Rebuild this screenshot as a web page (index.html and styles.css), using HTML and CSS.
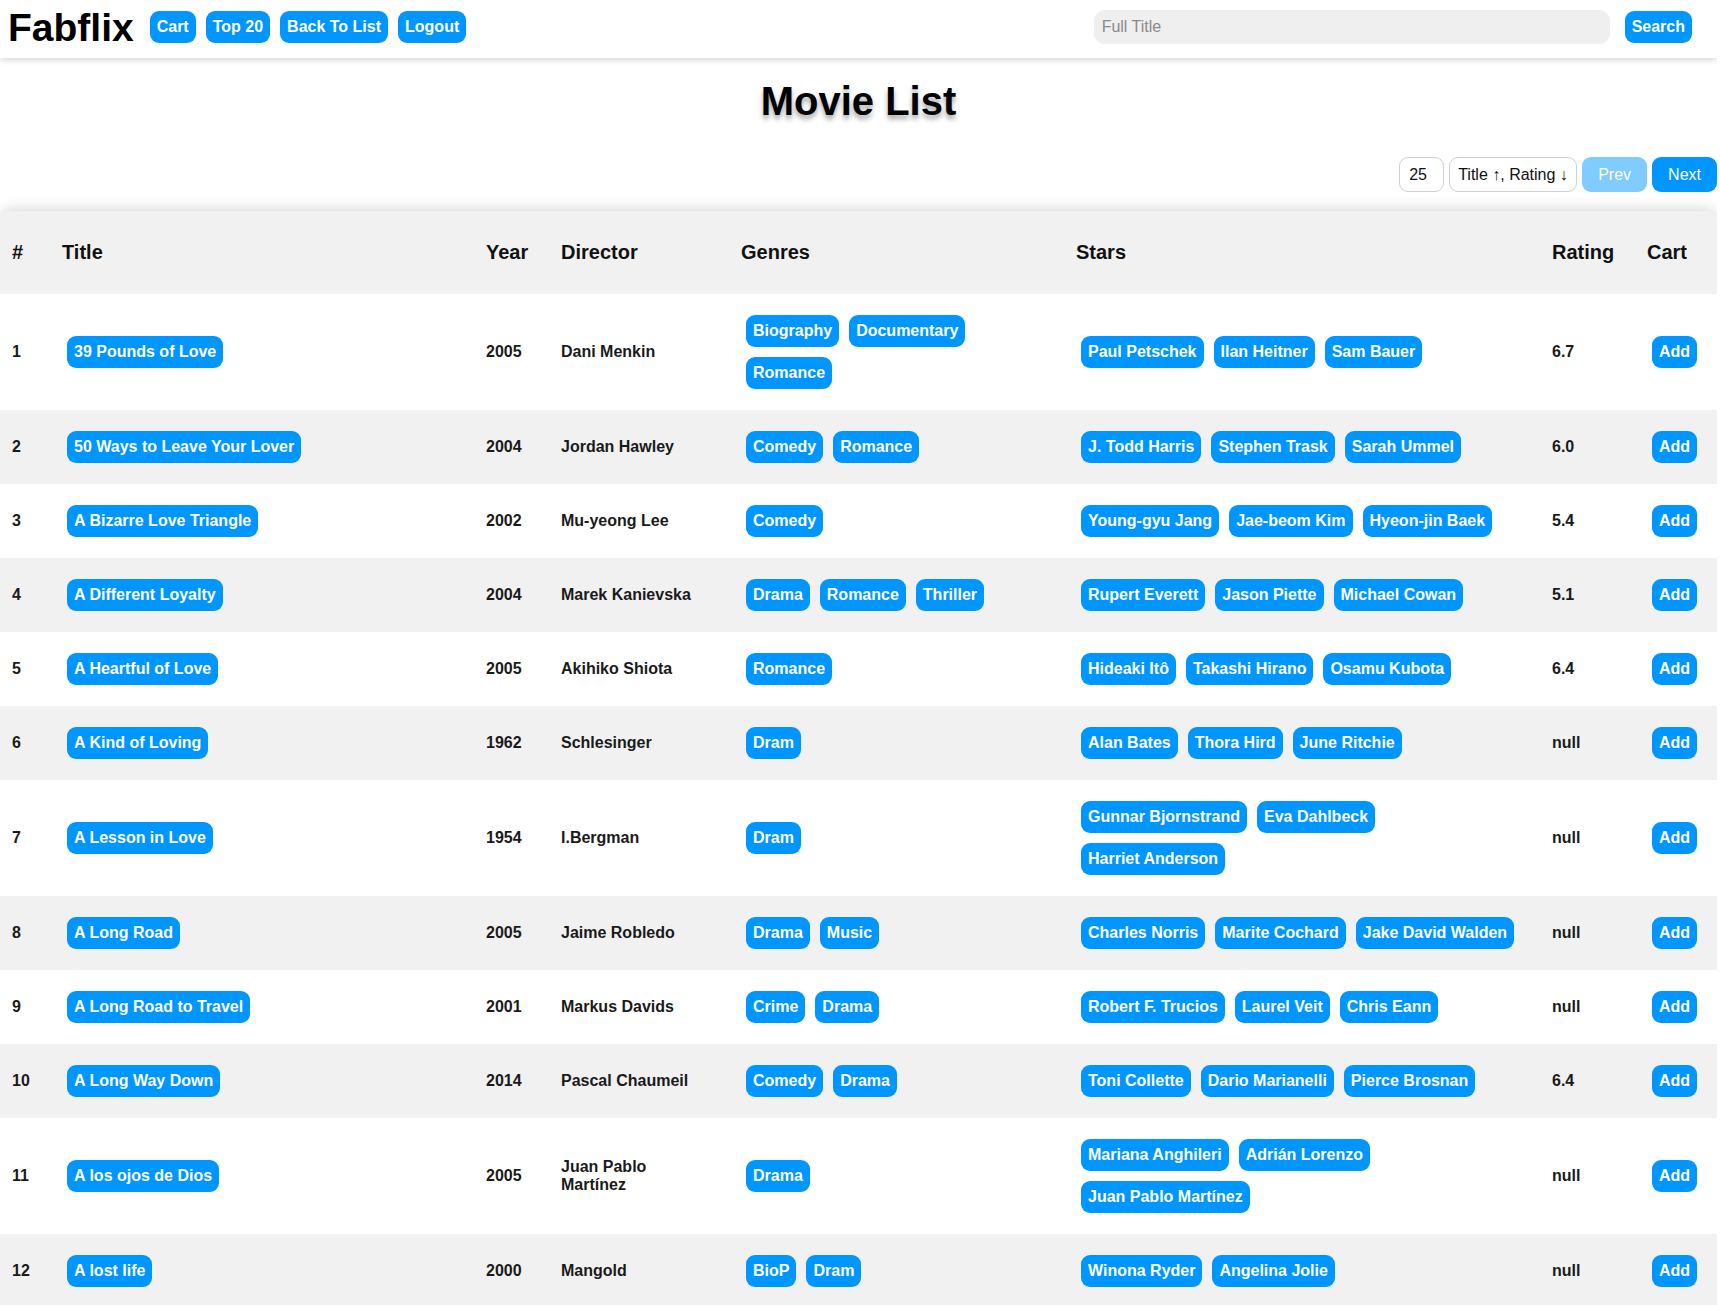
FILE: index.html
```html
<!DOCTYPE html>
<html lang="en">
<head>
<meta charset="utf-8">
<title>Fabflix - Movie List</title>
<link rel="stylesheet" href="styles.css">
</head>
<body>
<header class="topbar">
  <div class="brand">Fabflix</div>
  <nav class="nav">
    <a class="btn" href="#">Cart</a>
    <a class="btn" href="#">Top 20</a>
    <a class="btn" href="#">Back To List</a>
    <a class="btn" href="#">Logout</a>
  </nav>
  <form class="search">
    <input class="search-input" type="text" placeholder="Full Title">
    <button class="btn" type="button">Search</button>
  </form>
</header>

<main class="page">
  <h1 class="page-title">Movie List</h1>

  <div class="controls">
    <span class="field per-page">25</span>
    <span class="field sort">Title ↑, Rating ↓</span>
    <button class="pager pager-disabled" type="button">Prev</button>
    <button class="pager" type="button">Next</button>
  </div>

  <table class="movies">
    <colgroup>
      <col class="c-num"><col class="c-title"><col class="c-year"><col class="c-dir">
      <col class="c-genres"><col class="c-stars"><col class="c-rating"><col class="c-cart">
    </colgroup>
    <thead>
      <tr><th>#</th><th>Title</th><th>Year</th><th>Director</th><th>Genres</th><th>Stars</th><th>Rating</th><th>Cart</th></tr>
    </thead>
    <tbody>
      <tr>
        <td>1</td>
        <td><div class="tags"><a class="pill" href="#">39 Pounds of Love</a></div></td>
        <td>2005</td>
        <td class="dir">Dani Menkin</td>
        <td><div class="tags"><a class="pill" href="#">Biography</a><a class="pill" href="#">Documentary</a><a class="pill" href="#">Romance</a></div></td>
        <td><div class="tags"><a class="pill" href="#">Paul Petschek</a><a class="pill" href="#">Ilan Heitner</a><a class="pill" href="#">Sam Bauer</a></div></td>
        <td>6.7</td>
        <td><div class="tags"><a class="pill" href="#">Add</a></div></td>
      </tr>
      <tr>
        <td>2</td>
        <td><div class="tags"><a class="pill" href="#">50 Ways to Leave Your Lover</a></div></td>
        <td>2004</td>
        <td class="dir">Jordan Hawley</td>
        <td><div class="tags"><a class="pill" href="#">Comedy</a><a class="pill" href="#">Romance</a></div></td>
        <td><div class="tags"><a class="pill" href="#">J. Todd Harris</a><a class="pill" href="#">Stephen Trask</a><a class="pill" href="#">Sarah Ummel</a></div></td>
        <td>6.0</td>
        <td><div class="tags"><a class="pill" href="#">Add</a></div></td>
      </tr>
      <tr>
        <td>3</td>
        <td><div class="tags"><a class="pill" href="#">A Bizarre Love Triangle</a></div></td>
        <td>2002</td>
        <td class="dir">Mu-yeong Lee</td>
        <td><div class="tags"><a class="pill" href="#">Comedy</a></div></td>
        <td><div class="tags"><a class="pill" href="#">Young-gyu Jang</a><a class="pill" href="#">Jae-beom Kim</a><a class="pill" href="#">Hyeon-jin Baek</a></div></td>
        <td>5.4</td>
        <td><div class="tags"><a class="pill" href="#">Add</a></div></td>
      </tr>
      <tr>
        <td>4</td>
        <td><div class="tags"><a class="pill" href="#">A Different Loyalty</a></div></td>
        <td>2004</td>
        <td class="dir">Marek Kanievska</td>
        <td><div class="tags"><a class="pill" href="#">Drama</a><a class="pill" href="#">Romance</a><a class="pill" href="#">Thriller</a></div></td>
        <td><div class="tags"><a class="pill" href="#">Rupert Everett</a><a class="pill" href="#">Jason Piette</a><a class="pill" href="#">Michael Cowan</a></div></td>
        <td>5.1</td>
        <td><div class="tags"><a class="pill" href="#">Add</a></div></td>
      </tr>
      <tr>
        <td>5</td>
        <td><div class="tags"><a class="pill" href="#">A Heartful of Love</a></div></td>
        <td>2005</td>
        <td class="dir">Akihiko Shiota</td>
        <td><div class="tags"><a class="pill" href="#">Romance</a></div></td>
        <td><div class="tags"><a class="pill" href="#">Hideaki Itô</a><a class="pill" href="#">Takashi Hirano</a><a class="pill" href="#">Osamu Kubota</a></div></td>
        <td>6.4</td>
        <td><div class="tags"><a class="pill" href="#">Add</a></div></td>
      </tr>
      <tr>
        <td>6</td>
        <td><div class="tags"><a class="pill" href="#">A Kind of Loving</a></div></td>
        <td>1962</td>
        <td class="dir">Schlesinger</td>
        <td><div class="tags"><a class="pill" href="#">Dram</a></div></td>
        <td><div class="tags"><a class="pill" href="#">Alan Bates</a><a class="pill" href="#">Thora Hird</a><a class="pill" href="#">June Ritchie</a></div></td>
        <td>null</td>
        <td><div class="tags"><a class="pill" href="#">Add</a></div></td>
      </tr>
      <tr>
        <td>7</td>
        <td><div class="tags"><a class="pill" href="#">A Lesson in Love</a></div></td>
        <td>1954</td>
        <td class="dir">I.Bergman</td>
        <td><div class="tags"><a class="pill" href="#">Dram</a></div></td>
        <td><div class="tags"><a class="pill" href="#">Gunnar Bjornstrand</a><a class="pill" href="#">Eva Dahlbeck</a><a class="pill" href="#">Harriet Anderson</a></div></td>
        <td>null</td>
        <td><div class="tags"><a class="pill" href="#">Add</a></div></td>
      </tr>
      <tr>
        <td>8</td>
        <td><div class="tags"><a class="pill" href="#">A Long Road</a></div></td>
        <td>2005</td>
        <td class="dir">Jaime Robledo</td>
        <td><div class="tags"><a class="pill" href="#">Drama</a><a class="pill" href="#">Music</a></div></td>
        <td><div class="tags"><a class="pill" href="#">Charles Norris</a><a class="pill" href="#">Marite Cochard</a><a class="pill" href="#">Jake David Walden</a></div></td>
        <td>null</td>
        <td><div class="tags"><a class="pill" href="#">Add</a></div></td>
      </tr>
      <tr>
        <td>9</td>
        <td><div class="tags"><a class="pill" href="#">A Long Road to Travel</a></div></td>
        <td>2001</td>
        <td class="dir">Markus Davids</td>
        <td><div class="tags"><a class="pill" href="#">Crime</a><a class="pill" href="#">Drama</a></div></td>
        <td><div class="tags"><a class="pill" href="#">Robert F. Trucios</a><a class="pill" href="#">Laurel Veit</a><a class="pill" href="#">Chris Eann</a></div></td>
        <td>null</td>
        <td><div class="tags"><a class="pill" href="#">Add</a></div></td>
      </tr>
      <tr>
        <td>10</td>
        <td><div class="tags"><a class="pill" href="#">A Long Way Down</a></div></td>
        <td>2014</td>
        <td class="dir">Pascal Chaumeil</td>
        <td><div class="tags"><a class="pill" href="#">Comedy</a><a class="pill" href="#">Drama</a></div></td>
        <td><div class="tags"><a class="pill" href="#">Toni Collette</a><a class="pill" href="#">Dario Marianelli</a><a class="pill" href="#">Pierce Brosnan</a></div></td>
        <td>6.4</td>
        <td><div class="tags"><a class="pill" href="#">Add</a></div></td>
      </tr>
      <tr>
        <td>11</td>
        <td><div class="tags"><a class="pill" href="#">A los ojos de Dios</a></div></td>
        <td>2005</td>
        <td class="dir">Juan Pablo Martínez</td>
        <td><div class="tags"><a class="pill" href="#">Drama</a></div></td>
        <td><div class="tags"><a class="pill" href="#">Mariana Anghileri</a><a class="pill" href="#">Adrián Lorenzo</a><a class="pill" href="#">Juan Pablo Martínez</a></div></td>
        <td>null</td>
        <td><div class="tags"><a class="pill" href="#">Add</a></div></td>
      </tr>
      <tr>
        <td>12</td>
        <td><div class="tags"><a class="pill" href="#">A lost life</a></div></td>
        <td>2000</td>
        <td class="dir">Mangold</td>
        <td><div class="tags"><a class="pill" href="#">BioP</a><a class="pill" href="#">Dram</a></div></td>
        <td><div class="tags"><a class="pill" href="#">Winona Ryder</a><a class="pill" href="#">Angelina Jolie</a></div></td>
        <td>null</td>
        <td><div class="tags"><a class="pill" href="#">Add</a></div></td>
      </tr>
    </tbody>
  </table>
</main>
</body>
</html>
```

FILE: styles.css
```css
* {
  box-sizing: border-box;
}

html, body {
  background: #ffffff;
}

body {
  margin: 0 3px 0 0;
  font-family: "Liberation Sans", Arial, sans-serif;
  color: #111111;
}

/* ---------- top bar ---------- */
.topbar {
  display: flex;
  align-items: center;
  height: 58px;
  padding: 0 25px 4px 8px;
  background: #ffffff;
  box-shadow: 0 2px 6px rgba(0, 0, 0, 0.16);
  position: relative;
  z-index: 2;
}

.brand {
  font-size: 39px;
  font-weight: 700;
  color: #000000;
  margin-right: 16px;
  line-height: 1;
}

.nav {
  display: flex;
  gap: 10px;
}

.btn {
  display: inline-flex;
  align-items: center;
  height: 32px;
  padding: 0 7px;
  border: none;
  border-radius: 9px;
  background: #0096ff;
  color: #ffffff;
  font-family: "Liberation Sans", Arial, sans-serif;
  font-size: 16px;
  font-weight: 700;
  text-decoration: none;
  cursor: pointer;
}

.search {
  display: flex;
  align-items: center;
  gap: 15px;
  margin: 0 0 0 auto;
}

.search-input {
  width: 516px;
  height: 34px;
  padding: 0 8px;
  border: none;
  border-radius: 11px;
  background: #efefef;
  font-family: "Liberation Sans", Arial, sans-serif;
  font-size: 16px;
  color: #222222;
  outline: none;
}

.search-input::placeholder {
  color: #8a8a8a;
}

/* ---------- page ---------- */
.page {
  display: flex;
  flex-direction: column;
}

.page-title {
  margin: 21px 0 0;
  text-align: center;
  font-size: 40px;
  font-weight: 700;
  line-height: 45px;
  color: #000000;
  text-shadow: 0 4px 5px rgba(0, 0, 0, 0.35);
}

.controls {
  display: flex;
  justify-content: flex-end;
  align-items: center;
  gap: 5px;
  margin-top: 33px;
  height: 35px;
}

.field {
  display: inline-flex;
  align-items: center;
  height: 35px;
  padding: 0 9px;
  border: 1px solid #cfcfcf;
  border-radius: 9px;
  background: #ffffff;
  font-size: 16px;
  color: #111111;
  white-space: nowrap;
}

.per-page {
  width: 45px;
}

.sort {
  width: 128px;
  padding: 0 8px;
}

.pager {
  height: 35px;
  padding: 0 16px;
  border: none;
  border-radius: 9px;
  background: #0096ff;
  color: #ffffff;
  font-family: "Liberation Sans", Arial, sans-serif;
  font-size: 16px;
  cursor: pointer;
}

.pager-disabled {
  background: #80cbff;
}

/* ---------- table ---------- */
.movies {
  margin-top: 19px;
  width: 100%;
  table-layout: fixed;
  border-collapse: separate;
  border-spacing: 0;
  border-radius: 12px 12px 0 0;
  overflow: hidden;
  box-shadow: 0 -2px 14px rgba(0, 0, 0, 0.16);
}

.c-num { width: 50px; }
.c-title { width: 424px; }
.c-year { width: 75px; }
.c-dir { width: 180px; }
.c-genres { width: 335px; }
.c-stars { width: 476px; }
.c-rating { width: 95px; }
.c-cart { width: 82px; }

.movies th {
  padding: 30px 12px;
  background: #f1f1f1;
  text-align: left;
  font-size: 20px;
  font-weight: 700;
  color: #111111;
}

.movies td {
  padding: 16px 12px;
  vertical-align: middle;
  font-size: 16px;
  font-weight: 700;
  color: #1a1a1a;
}

.movies td.dir {
  padding-right: 20px;
}

.movies tbody tr:nth-child(odd) {
  background: #ffffff;
}

.movies tbody tr:nth-child(even) {
  background: #f1f1f2;
}

.tags {
  display: flex;
  flex-wrap: wrap;
}

.pill {
  display: inline-flex;
  align-items: center;
  height: 32px;
  margin: 5px;
  padding: 0 7px;
  border-radius: 9px;
  background: #0096ff;
  color: #ffffff;
  font-size: 16px;
  font-weight: 700;
  text-decoration: none;
  white-space: nowrap;
}
```
